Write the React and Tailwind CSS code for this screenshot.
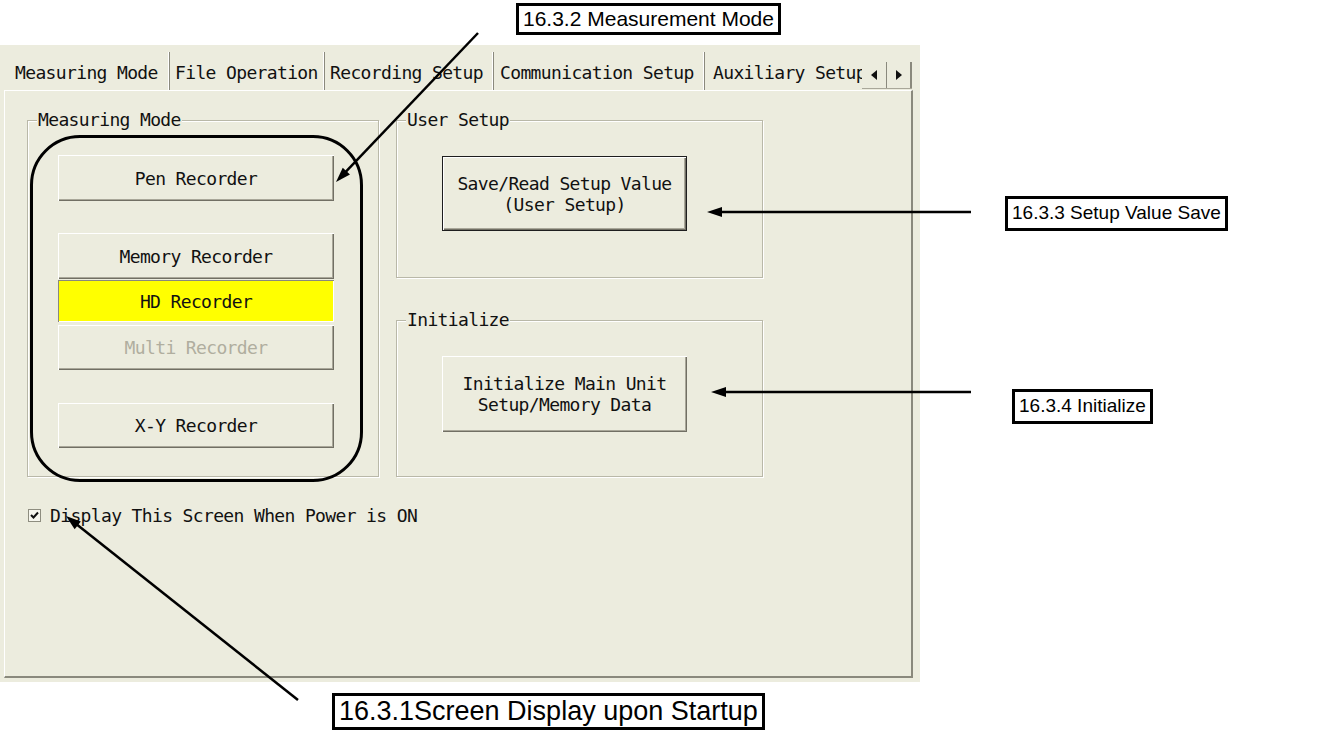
import React from "react";

const ui = "font-['DejaVu_Sans_Mono','Liberation_Mono',monospace] text-[18px] tracking-[-0.64px] leading-[21px] text-[#111]";

const raised = "shadow-[inset_1px_1px_0_#ffffff,inset_-1px_-1px_0_#716f64,inset_-2px_-2px_0_#a9a799]";
const sunken = "shadow-[inset_1px_1px_0_#8a897d,inset_-1px_-1px_0_#ffffff]";

const Btn = ({ children, className = "" }) => (
  <div className={`flex flex-col items-center justify-center bg-[#ececde] ${raised} ${className}`}>
    {children}
  </div>
);

const Group = ({ label, className = "", children }) => (
  <div className={`relative border border-[#b9b8a8] shadow-[1px_1px_0_#ffffff,inset_1px_1px_0_#ffffff] ${className}`}>
    <span className="absolute -top-[11px] left-[9px] bg-[#ececde] px-[1px] leading-[20px]">{label}</span>
    {children}
  </div>
);

const Tab = ({ label, className = "" }) => (
  <div className={`flex items-center overflow-hidden whitespace-nowrap border-r border-r-[#8a897d] pt-[3px] shadow-[-1px_0_0_#ffffff_inset] ${className}`}>
    {label}
  </div>
);

function Arrow({ x1, y1, x2, y2 }) {
  // line from (x1,y1) to the tip (x2,y2), filled head at the tip
  const dx = x2 - x1;
  const dy = y2 - y1;
  const len = Math.hypot(dx, dy);
  const ux = dx / len;
  const uy = dy / len;
  const hl = 15;
  const hw = 5;
  const bx = x2 - ux * hl;
  const by = y2 - uy * hl;
  const pts = `${x2},${y2} ${bx - uy * hw},${by + ux * hw} ${bx + uy * hw},${by - ux * hw}`;
  return (
    <g>
      <line x1={x1} y1={y1} x2={bx + ux * 2} y2={by + uy * 2} stroke="#000" strokeWidth="2.5" />
      <polygon points={pts} fill="#000" />
    </g>
  );
}

const Note = ({ children, className = "" }) => (
  <div className={`absolute flex items-center whitespace-nowrap border-[3px] border-black bg-white px-[4px] font-['Liberation_Sans',Arial,sans-serif] text-black ${className}`}>
    {children}
  </div>
);

export default function App() {
  return (
    <div className="relative h-[731px] w-[1325px] overflow-hidden bg-white">
      <div className="h-[45px]" />

      {/* dialog */}
      <div className={`flex h-[637px] w-[920px] flex-col bg-[#ececde] pl-[4px] pr-[7px] pt-[7px] pb-[4px] ${ui}`}>
        {/* tabs */}
        <div className="flex h-[38px] pl-[6px]">
          <Tab label="Measuring Mode" className="w-[160px] pl-[5px]" />
          <Tab label="File Operation" className="w-[155px] pl-[5px]" />
          <Tab label="Recording Setup" className="w-[169px] pl-[5px]" />
          <Tab label="Communication Setup" className="w-[211px] pl-[6px]" />
          <div className="flex w-[157px] items-center overflow-hidden whitespace-nowrap pl-[8px] pt-[3px]">Auxiliary Setup</div>
          <div className="mb-[1px] flex h-[27px] w-[50px] self-end border-b border-[#a9a799]">
            <div className="flex w-[25px] items-center justify-center border-r border-[#8a897d]">
              <svg width="6" height="10" viewBox="0 0 6 10"><polygon points="6,0 6,10 0,5" fill="#111" /></svg>
            </div>
            <div className="flex w-[25px] items-center justify-center border-r-2 border-[#8a897d]">
              <svg width="6" height="10" viewBox="0 0 6 10"><polygon points="0,0 0,10 6,5" fill="#111" /></svg>
            </div>
          </div>
        </div>

        {/* tab page */}
        <div className="flex-1 border-l border-t border-l-white border-t-white border-b-2 border-r-2 border-b-[#8a897d] border-r-[#8a897d] pl-[22px] pt-[29px]">
          <div className="flex gap-[17px]">
            <Group label="Measuring Mode" className="h-[357px] w-[352px] pl-[30px] pt-[34px]">
              <Btn className="h-[46px] w-[276px]">Pen Recorder</Btn>
              <Btn className="mt-[32px] h-[46px] w-[276px]">Memory Recorder</Btn>
              <div className={`mt-[1px] flex h-[42px] w-[276px] items-center justify-center bg-[#ffff00] ${sunken}`}>HD Recorder</div>
              <Btn className="mt-[3px] h-[45px] w-[276px] text-[#b0ae9f]">Multi Recorder</Btn>
              <Btn className="mt-[33px] h-[45px] w-[276px]">X-Y Recorder</Btn>
            </Group>

            <div className="flex w-[367px] flex-col gap-[42px]">
              <Group label="User Setup" className="h-[158px] pl-[45px] pt-[35px]">
                <div className="h-[75px] w-[245px] border border-[#1e1e1e]">
                  <Btn className="h-full w-full">
                    <span>Save/Read Setup Value</span>
                    <span>(User Setup)</span>
                  </Btn>
                </div>
              </Group>
              <Group label="Initialize" className="h-[157px] pl-[45px] pt-[35px]">
                <Btn className="h-[76px] w-[245px]">
                  <span>Initialize Main Unit</span>
                  <span>Setup/Memory Data</span>
                </Btn>
              </Group>
            </div>
          </div>

          <div className="ml-[1px] mt-[28px] flex items-center gap-[9px]">
            <div className="flex h-[13px] w-[13px] items-center justify-center border border-[#8e8d80] bg-[#f6f6ee]">
              <svg width="9" height="9" viewBox="0 0 9 9">
                <polyline points="1,4 3.5,6.5 8,1.5" fill="none" stroke="#111" strokeWidth="2" />
              </svg>
            </div>
            <span>Display This Screen When Power is ON</span>
          </div>
        </div>
      </div>

      {/* annotation overlay */}
      <div className="pointer-events-none absolute left-[30px] top-[135px] h-[347px] w-[333px] rounded-[50px] border-[3px] border-black" />

      <svg className="pointer-events-none absolute left-0 top-0" width="1325" height="731" viewBox="0 0 1325 731">
        <Arrow x1={478} y1={33} x2={336} y2={182} />
        <Arrow x1={971} y1={212} x2={707} y2={212} />
        <Arrow x1={971} y1={392} x2={711} y2={392} />
        <Arrow x1={298} y1={700} x2={66} y2={516} />
      </svg>

      <Note className="left-[516px] top-[3px] h-[32px] text-[21px]">16.3.2 Measurement Mode</Note>
      <Note className="left-[1005px] top-[196px] h-[35px] text-[19px]">16.3.3 Setup Value Save</Note>
      <Note className="left-[1012px] top-[389px] h-[35px] text-[19px]">16.3.4 Initialize</Note>
      <Note className="left-[332px] top-[693px] h-[37px] text-[27px]">16.3.1Screen Display upon Startup</Note>
    </div>
  );
}
